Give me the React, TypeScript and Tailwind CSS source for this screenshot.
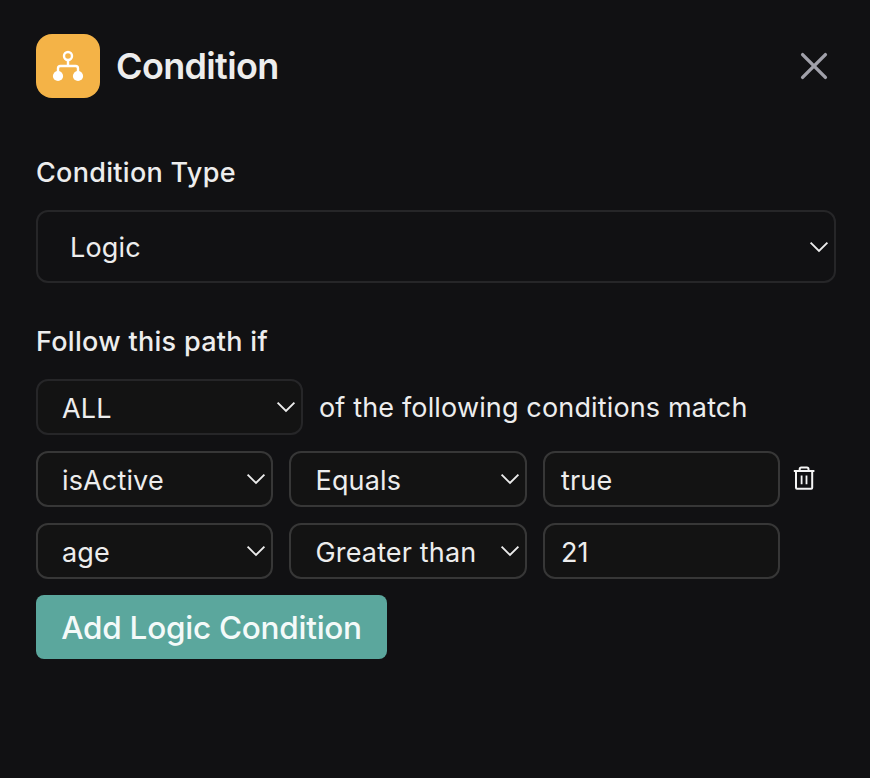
import type { ReactNode } from "react";

function Chevron() {
  return (
    <svg width="20" height="12" viewBox="0 0 20 12" fill="none" stroke="#ececec" strokeWidth="1.9" className="shrink-0">
      <path d="M1.6 1.6 10 10 18.4 1.6" />
    </svg>
  );
}

function SelectBox({ className, textClass = "pt-[3px]", children }: { className: string; textClass?: string; children: ReactNode }) {
  return (
    <button type="button" className={`flex shrink-0 items-center justify-between rounded-xl border-2 text-left ${className}`}>
      <span className={`whitespace-nowrap ${textClass}`}>{children}</span>
      <Chevron />
    </button>
  );
}

function ConditionRow({ field, operator, value, removable = false }: { field: string; operator: string; value: string; removable?: boolean }) {
  return (
    <div className="flex h-14 items-center">
      <SelectBox className="mr-4 h-14 w-[237px] border-[#373737] bg-[#131313] pr-[5px] pl-6">{field}</SelectBox>
      <SelectBox className="mr-4 h-14 w-[238px] border-[#373737] bg-[#131313] pr-[5px] pl-[24.5px]">{operator}</SelectBox>
      <div className="flex h-14 w-[237px] shrink-0 items-center rounded-xl border-2 border-[#373737] bg-[#131313] px-4 pt-[3px]">{value}</div>
      {removable && (
        <button type="button" aria-label="Remove condition" className="ml-3 h-6 w-6">
          <svg width="24" height="26" viewBox="0 0 24 26" fill="none" stroke="#f5f5f5" strokeWidth="2" className="-mt-0.5">
            <path d="M1.8 6H22.4" />
            <path d="M4 6V22.7Q4 23.7 5 23.7H19.2Q20.2 23.7 20.2 22.7V6" />
            <path d="M7.7 5.5V4Q7.7 2.4 9.3 2.4H14.9Q16.5 2.4 16.5 4V5.5" />
            <path d="M9.6 10.5V19.2M14.5 10.5V19.2" strokeWidth="1.8" />
          </svg>
        </button>
      )}
    </div>
  );
}

export default function App() {
  return (
    <div className="h-[778px] w-[870px] bg-[#111113] px-9 pt-[34px] font-['Inter',sans-serif] text-[27px] leading-9 tracking-[0.15px] text-[#ededed]">
      <header className="flex h-16 items-center">
        <div className="mr-4 h-16 w-16 rounded-2xl bg-[#f4b347]">
          <svg width="64" height="64" viewBox="0 0 64 64" fill="none" stroke="#fff" strokeWidth="2.4">
            <circle cx="32" cy="22" r="4" />
            <path d="M32 26V32M22 38V34.5Q22 32 24.5 32H39.5Q42 32 42 34.5V38" />
            <circle cx="22" cy="42" r="5.1" fill="#fff" stroke="none" />
            <circle cx="42" cy="42" r="5.1" fill="#fff" stroke="none" />
          </svg>
        </div>
        <h1 className="text-4xl font-semibold tracking-[-0.65px]">Condition</h1>
        <button type="button" aria-label="Close" className="mr-1.5 ml-auto">
          <svg width="28" height="28" viewBox="0 0 28 28" stroke="#a1a1aa" strokeWidth="3.4" strokeLinecap="round">
            <path d="M2.6 2.6 25.4 25.4M25.4 2.6 2.6 25.4" />
          </svg>
        </button>
      </header>

      <div className="mt-[57px] font-medium tracking-[0.3px]">Condition Type</div>
      <SelectBox className="mt-[19px] h-[73px] w-[800px] border-[#262628] pr-[5px] pl-8" textClass="pt-0.5">Logic</SelectBox>

      <div className="mt-[41px] font-medium tracking-[0.3px]">Follow this path if</div>
      <div className="mt-[19px] mb-4 flex items-center">
        <SelectBox className="h-14 w-[267px] border-[#262628] bg-[#131313] pr-[5px] pl-6">ALL</SelectBox>
        <span className="ml-4 pt-0.5 whitespace-nowrap">of the following conditions match</span>
      </div>
      <div className="flex flex-col gap-4">
        <ConditionRow field="isActive" operator="Equals" value="true" removable />
        <ConditionRow field="age" operator="Greater than" value="21" />
      </div>
      <button type="button" className="mt-4 h-16 w-[351px] rounded-lg bg-[#5ba79d] pt-0.5 text-[31.5px] font-[450] tracking-[-0.25px] whitespace-nowrap text-[#f4faf9]">Add Logic Condition</button>
    </div>
  );
}
